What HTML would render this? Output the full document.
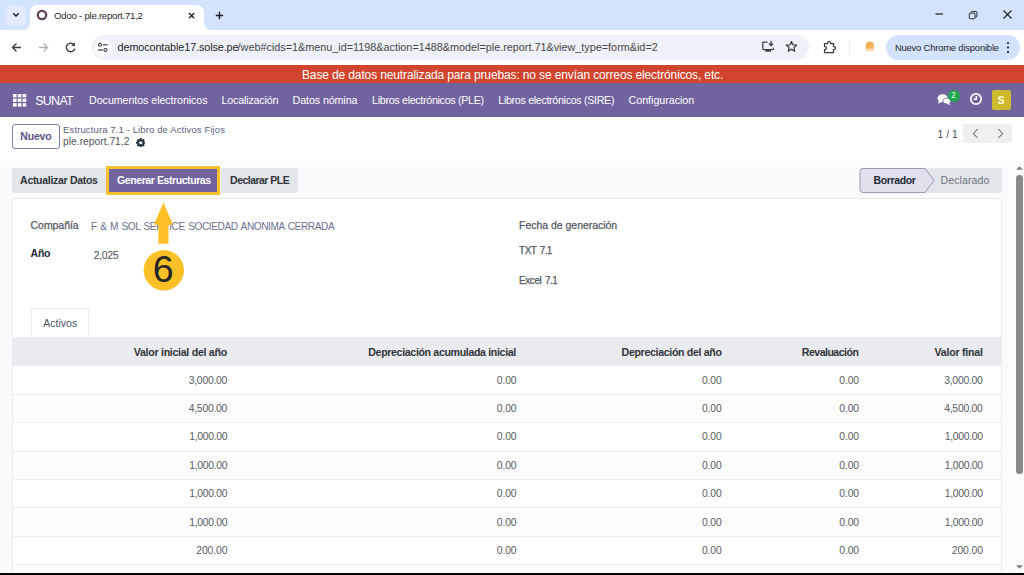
<!DOCTYPE html>
<html lang="es">
<head>
<meta charset="utf-8">
<title>Odoo - ple.report.71,2</title>
<style>
*{box-sizing:border-box;margin:0;padding:0}
html,body{width:1024px;height:575px;overflow:hidden;background:#f9fafb}
body{position:relative;font-family:"Liberation Sans",sans-serif;font-size:11px;color:#374151}
.abs,.t{position:absolute}
.t{white-space:nowrap;line-height:1}
/* browser chrome */
#tabstrip{left:0;top:0;width:1024px;height:30px;background:#d3e3fd}
#toolbar{left:0;top:30px;width:1024px;height:35px;background:#fff}
#tab{left:30px;top:5px;width:174px;height:26px;background:#fff;border-radius:8px 8px 0 0}
#tabsearch{left:5px;top:5px;width:21px;height:21px;border-radius:6px;background:#e1ebfd}
#omni{left:92px;top:35px;width:717px;height:25px;border-radius:12.5px;background:#eef1f7}
#siteinfo{left:93.500px;top:38.500px;width:18px;height:18px;border-radius:9px;background:#fafbfd}
#chip{left:886px;top:35px;width:134px;height:25px;border-radius:12.5px;background:#d3e3fd}
/* odoo */
#banner{left:0;top:65px;width:1024px;height:18.4px;background:#d1452e}
#navbar{left:0;top:83px;width:1024px;height:34px;background:#71639e}
#cp{left:0;top:117px;width:1024px;height:44.6px;background:#fff;border-bottom:1px solid #e3e6ea}
#content{left:0;top:161px;width:1012px;height:412px;background:#f9fafb}
#sheet{left:12px;top:198px;width:989.5px;height:380px;background:#fff;border:1px solid #e9ebee;border-radius:3px 3px 0 0}
#scroll{left:1012px;top:161px;width:12px;height:412px;background:#fbfcfc}
#thumb{left:1016px;top:175px;width:6.5px;height:298.5px;border-radius:3.2px;background:#88898b}
#blackbar{left:0;top:572.5px;width:1024px;height:3px;background:#000}
.nav{color:#fff;font-size:11px;top:95px}
.btn{top:168px;height:25px;background:#e2e5e9;color:#30353b;font-weight:bold;font-size:10.5px;text-align:center;line-height:25px;white-space:nowrap}
.lbl{color:#4b5563;font-size:10.5px}
.val{color:#5d6470;font-size:10.5px}
.th{top:347px;font-weight:bold;color:#30353b;font-size:10.5px;text-align:right}
.td{color:#4b5058;font-size:10.5px;text-align:right}
.row{left:13px;width:988px;height:28.5px;border-bottom:1px solid #eaecef}
</style>
</head>
<body>
<!-- Chrome tab strip -->
<div id="tabstrip" class="abs"></div>
<div id="toolbar" class="abs"></div>
<div id="tabsearch" class="abs"></div>
<svg class="abs" style="left:10.500px;top:11px" width="10" height="8" viewBox="0 0 10 8"><path d="M2.200 2.300 L5 5 L7.800 2.300" fill="none" stroke="#1f1f1f" stroke-width="1.500"/></svg>
<svg class="abs" style="left:20px;top:0" width="200" height="31" viewBox="0 0 200 31"><path d="M2 30 Q10 30 10 22 L10 13 Q10 5 18 5 L176 5 Q184 5 184 13 L184 22 Q184 30 192 30 L192 31 L2 31 Z" fill="#fff"/></svg>
<svg class="abs" style="left:36px;top:9px" width="12" height="12" viewBox="0 0 12 12"><circle cx="6" cy="6" r="4.200" fill="none" stroke="#5f4359" stroke-width="2.300"/></svg>
<svg class="abs" style="left:187px;top:11px" width="9" height="9" viewBox="0 0 9 9"><path d="M2 2 L7.200 7.200 M7.200 2 L2 7.200" stroke="#1f1f1f" stroke-width="1.300" fill="none"/></svg>
<svg class="abs" style="left:214px;top:10px" width="11" height="11" viewBox="0 0 11 11"><path d="M5.500 1.800 V9.200 M1.800 5.500 H9.200" stroke="#1f1f1f" stroke-width="1.400" fill="none"/></svg>
<!-- window controls -->
<svg class="abs" style="left:934px;top:8px" width="12" height="12" viewBox="0 0 12 12"><path d="M1.500 6 H9" stroke="#1f1f1f" stroke-width="1.200"/></svg>
<svg class="abs" style="left:967.800px;top:9.500px" width="10.500" height="10.500" viewBox="0 0 12 12"><rect x="1.5" y="3.5" width="6.5" height="6.5" rx="1.2" fill="none" stroke="#1f1f1f" stroke-width="1.1"/><path d="M3.8 3.3 V2.8 a1.2 1.2 0 0 1 1.2 -1.2 H9 a1.2 1.2 0 0 1 1.2 1.2 V7 a1.2 1.2 0 0 1 -1.2 1.2 H8.3" fill="none" stroke="#1f1f1f" stroke-width="1.1"/></svg>
<svg class="abs" style="left:1002px;top:9px" width="11" height="11" viewBox="0 0 11 11"><path d="M1.5 1.5 L9.5 9.5 M9.5 1.5 L1.5 9.5" stroke="#1f1f1f" stroke-width="1.1" fill="none"/></svg>
<!-- toolbar icons -->
<svg class="abs" style="left:11px;top:42px" width="11" height="11" viewBox="0 0 11 11"><path d="M10 5.5 H1.8 M5.5 1.5 L1.5 5.5 L5.5 9.5" stroke="#3c3c3c" stroke-width="1.4" fill="none"/></svg>
<svg class="abs" style="left:38px;top:42px" width="11" height="11" viewBox="0 0 11 11"><path d="M1 5.5 H9.2 M5.5 1.5 L9.5 5.5 L5.5 9.5" stroke="#b4b4b4" stroke-width="1.3" fill="none"/></svg>
<svg class="abs" style="left:64px;top:41px" width="13" height="13" viewBox="0 0 13 13"><path d="M10.3 4.2 A4.3 4.3 0 1 0 10.8 7.6" stroke="#3c3c3c" stroke-width="1.4" fill="none"/><path d="M10.9 1.3 V4.9 H7.3 Z" fill="#3c3c3c"/></svg>
<div id="omni" class="abs"></div>
<div id="siteinfo" class="abs"></div>
<svg class="abs" style="left:97px;top:42px" width="12" height="11" viewBox="0 0 12 11"><circle cx="3" cy="2.8" r="1.5" fill="none" stroke="#3c3c3c" stroke-width="1.1"/><path d="M6 2.8 H10.5" stroke="#3c3c3c" stroke-width="1.2"/><circle cx="8.5" cy="8" r="1.5" fill="none" stroke="#3c3c3c" stroke-width="1.1"/><path d="M1 8 H5.8" stroke="#3c3c3c" stroke-width="1.2"/></svg>
<svg class="abs" style="left:760.700px;top:40.300px" width="14" height="13" viewBox="0 0 14 13"><path d="M6.500 2 H2.800 a1 1 0 0 0 -1 1 V8.600 a1 1 0 0 0 1 1 H11.400 a1 1 0 0 0 1 -1 V7.800" fill="none" stroke="#3c3c3c" stroke-width="1.250"/><path d="M4.300 10.900 H9.900" fill="none" stroke="#3c3c3c" stroke-width="1.700"/><path d="M10 0.800 V5.200 M8 3.500 L10 5.500 L12 3.500" fill="none" stroke="#3c3c3c" stroke-width="1.250"/></svg>
<svg class="abs" style="left:785px;top:40.300px" width="13" height="13" viewBox="0 0 14 14"><path d="M7 1.600 L8.600 5.200 L12.500 5.600 L9.600 8.200 L10.400 12 L7 10 L3.600 12 L4.400 8.200 L1.500 5.600 L5.400 5.200 Z" fill="none" stroke="#3c3c3c" stroke-width="1.350" stroke-linejoin="round"/></svg>
<svg class="abs" style="left:822.500px;top:39.500px" width="14" height="14" viewBox="0 0 14 14"><path d="M1.500 3.500 H4.500 V3 a1.500 1.500 0 0 1 3 0 V3.500 H10.500 V6.500 H11 a1.500 1.500 0 0 1 0 3 H10.500 V12.500 H1.500 V9.500 H2 a1.500 1.500 0 0 0 0 -3 H1.500 Z" fill="none" stroke="#3c3c3c" stroke-width="1.250" stroke-linejoin="round"/></svg>
<div class="abs" style="left:849px;top:41px;width:1px;height:13px;background:#e3e9f5"></div>
<svg class="abs" style="left:863px;top:40px" width="14" height="14" viewBox="0 0 14 14"><path d="M2.700 8.800 V5.700 a4.100 4.100 0 0 1 8.200 0 V8.800 Z" fill="#f6b256"/><rect x="2.700" y="9.300" width="8.200" height="1.900" rx="0.900" fill="#f9d7a3"/></svg>
<div id="chip" class="abs"></div>
<svg class="abs" style="left:1006px;top:41px" width="4" height="13" viewBox="0 0 4 13"><circle cx="2" cy="2" r="1.1" fill="#1f1f1f"/><circle cx="2" cy="6.5" r="1.1" fill="#1f1f1f"/><circle cx="2" cy="11" r="1.1" fill="#1f1f1f"/></svg>

<!-- Odoo -->
<div id="navbar" class="abs"></div>
<div id="banner" class="abs"></div>
<svg class="abs" style="left:13px;top:94px" width="14" height="13" viewBox="0 0 14 13"><g fill="#fff"><rect x="0" y="0" width="3.6" height="3.4"/><rect x="4.8" y="0" width="3.6" height="3.4"/><rect x="9.6" y="0" width="3.6" height="3.4"/><rect x="0" y="4.6" width="3.6" height="3.4"/><rect x="4.8" y="4.6" width="3.6" height="3.4"/><rect x="9.6" y="4.6" width="3.6" height="3.4"/><rect x="0" y="9.2" width="3.6" height="3.4"/><rect x="4.8" y="9.2" width="3.6" height="3.4"/><rect x="9.6" y="9.2" width="3.6" height="3.4"/></g></svg>
<!-- systray -->
<svg class="abs" style="left:936.500px;top:92.500px" width="15" height="13.100" viewBox="0 0 16 14"><ellipse cx="6" cy="5.5" rx="5.5" ry="4.2" fill="#fff"/><path d="M2 8 L1 11.5 L5 9.5 Z" fill="#fff"/><ellipse cx="10.5" cy="8.5" rx="4.2" ry="3.2" fill="#fff" stroke="#71639e" stroke-width="0.8"/><path d="M12.5 10.5 L14.5 13 L10.5 11.5 Z" fill="#fff"/></svg>
<div class="abs" style="left:947.500px;top:89.900px;width:12.600px;height:12.600px;border-radius:6.300px;background:#21a84f"></div>
<svg class="abs" style="left:969px;top:92.300px" width="14" height="14" viewBox="0 0 14 14"><circle cx="7" cy="7" r="5.2" fill="none" stroke="#fff" stroke-width="1.7"/><path d="M7.3 4 V7.3 H4.6" fill="none" stroke="#fff" stroke-width="1.5"/></svg>
<div class="abs" style="left:992px;top:90.300px;width:19.200px;height:19.900px;border-radius:2px;background:#cdb92d"></div>

<!-- control panel -->
<div id="cp" class="abs"></div>
<div class="abs" style="left:12px;top:123.5px;width:48px;height:25px;border:1px solid #8378ad;border-radius:3px;background:#fff"></div>
<svg class="abs" style="left:135.600px;top:137.500px" width="9.500" height="9.500" viewBox="0 0 10 10"><g transform="translate(5 5)"><g fill="#2c3942"><rect x="-1.1" y="-5" width="2.2" height="10"/><rect x="-1.1" y="-5" width="2.2" height="10" transform="rotate(45)"/><rect x="-1.1" y="-5" width="2.2" height="10" transform="rotate(90)"/><rect x="-1.1" y="-5" width="2.2" height="10" transform="rotate(135)"/><circle r="3.6"/></g><circle r="1.7" fill="#fff"/></g></svg>
<div class="abs" style="left:963px;top:124px;width:49px;height:18.5px;background:#eeeff1;border-radius:3px"></div>
<svg class="abs" style="left:972px;top:128px" width="7" height="11" viewBox="0 0 7 11"><path d="M5.5 1 L1.5 5.5 L5.5 10" fill="none" stroke="#6b6b6b" stroke-width="1.1"/></svg>
<svg class="abs" style="left:997px;top:128px" width="7" height="11" viewBox="0 0 7 11"><path d="M1.5 1 L5.5 5.5 L1.5 10" fill="none" stroke="#6b6b6b" stroke-width="1.1"/></svg>

<!-- content -->
<div id="content" class="abs"></div>
<div id="sheet" class="abs"></div>
<!-- status bar buttons -->
<div class="abs btn" id="b1" style="left:12px;width:95px;border-radius:3px 0 0 3px"></div>
<div class="abs" style="left:106px;top:166px;width:114px;height:29px;background:#f6c12c"></div>
<div class="abs btn" id="b2" style="left:109px;width:108px;top:169px;height:23px;line-height:23px;background:#71639e;color:#fff"></div>
<div class="abs btn" id="b3" style="left:221px;width:77px;border-radius:0 3px 3px 0"></div>
<!-- status pills -->
<svg class="abs" style="left:859px;top:167px" width="144" height="27" viewBox="0 0 144 27"><path d="M66 1 H140 a3 3 0 0 1 3 3 V23 a3 3 0 0 1 -3 3 H66 Z" fill="#e2e5e9"/><path d="M4 1.5 H66 L75 13.5 L66 25.500 H4 a3 3 0 0 1 -3 -3 V4.500 a3 3 0 0 1 3 -3 Z" fill="#e3e0ee" stroke="#9d97b5" stroke-width="1"/></svg>

<!-- form fields -->


<!-- notebook tab -->
<div class="abs" style="left:31px;top:308px;width:58px;height:30px;border:1px solid #eaecef;border-bottom:none;border-radius:3px 3px 0 0;background:#fff"></div>

<!-- table -->
<div class="abs" style="left:12.500px;top:337px;width:988.500px;height:29px;background:#e9ebee"></div>

<div class="abs row" style="top:366.5px;height:28.38px;background:#ffffff"></div>
<div class="abs row" style="top:394.9px;height:28.38px;background:#fcfcfd"></div>
<div class="abs row" style="top:423.3px;height:28.38px;background:#ffffff"></div>
<div class="abs row" style="top:451.6px;height:28.38px;background:#fcfcfd"></div>
<div class="abs row" style="top:480.0px;height:28.38px;background:#ffffff"></div>
<div class="abs row" style="top:508.4px;height:28.38px;background:#fcfcfd"></div>
<div class="abs row" style="top:536.8px;height:28.38px;background:#ffffff"></div>
<div class="abs row" style="top:565.2px;height:28.38px;background:#fcfcfd;border-bottom:none"></div>
<span class="t" id="tabtitle" style="left:54.1px;top:10.7px;font-size:9.6px;color:#1f1f1f;letter-spacing:-0.24px">Odoo - ple.report.71,2</span>
<span class="t" id="urld" style="left:117.6px;top:42.1px;font-size:10.8px;color:#1f1f1f;letter-spacing:-0.10px">democontable17.solse.pe</span>
<span class="t" id="urlp" style="left:237.6px;top:42.1px;font-size:10.8px;color:#474747;letter-spacing:0.01px">/web#cids=1&amp;menu_id=1198&amp;action=1488&amp;model=ple.report.71&amp;view_type=form&amp;id=2</span>
<span class="t" id="chiptxt" style="left:894.9px;top:42.5px;font-size:9.4px;color:#1f1f1f;letter-spacing:-0.17px">Nuevo Chrome disponible</span>
<span class="t" id="bannertxt" style="left:302.0px;top:68.8px;font-size:12px;color:#fff;letter-spacing:-0.13px">Base de datos neutralizada para pruebas: no se envían correos electrónicos, etc.</span>
<span class="t" id="brand" style="left:35.2px;top:94.6px;font-size:12.4px;color:#fff;letter-spacing:-0.65px">SUNAT</span>
<span class="t" id="n1" style="left:89.1px;top:95.4px;font-size:10.7px;color:#fff;letter-spacing:-0.07px">Documentos electronicos</span>
<span class="t" id="n2" style="left:221.6px;top:95.4px;font-size:10.7px;color:#fff;letter-spacing:-0.18px">Localización</span>
<span class="t" id="n3" style="left:292.6px;top:95.4px;font-size:10.7px;color:#fff;letter-spacing:-0.10px">Datos nómina</span>
<span class="t" id="n4" style="left:372.1px;top:95.4px;font-size:10.7px;color:#fff;letter-spacing:-0.31px">Libros electrónicos (PLE)</span>
<span class="t" id="n5" style="left:498.3px;top:95.4px;font-size:10.7px;color:#fff;letter-spacing:-0.32px">Libros electrónicos (SIRE)</span>
<span class="t" id="n6" style="left:628.6px;top:95.4px;font-size:10.7px;color:#fff;letter-spacing:-0.03px">Configuracion</span>
<span class="t" id="badge" style="left:951.3px;top:92.3px;font-size:8.2px;color:#eafff0">2</span>
<span class="t" id="avatar" style="left:997.6px;top:95.2px;font-size:10.6px;color:#fffbe0;font-weight:bold">S</span>
<span class="t" id="nuevo" style="left:20.3px;top:131.3px;font-size:10.5px;color:#5d5288;font-weight:bold;letter-spacing:-0.19px">Nuevo</span>
<span class="t" id="bc1" style="left:63.1px;top:125.2px;font-size:9.5px;color:#5b5f7a;letter-spacing:0.12px">Estructura 7.1 - Libro de Activos Fijos</span>
<span class="t" id="bc2" style="left:63.1px;top:137.0px;font-size:10.2px;color:#50555c;letter-spacing:0.04px">ple.report.71,2</span>
<span class="t" id="pager" style="left:937.5px;top:129.6px;font-size:10.2px;color:#444a52;word-spacing:1.2px;letter-spacing:-0.53px">1 / 1</span>
<span class="t" id="b1" style="left:20.1px;top:175.3px;font-size:10.5px;color:#30353b;font-weight:bold;letter-spacing:-0.30px">Actualizar Datos</span>
<span class="t" id="b2" style="left:117.1px;top:175.3px;font-size:10.5px;color:#fff;font-weight:bold;letter-spacing:-0.42px">Generar Estructuras</span>
<span class="t" id="b3" style="left:230.1px;top:175.3px;font-size:10.5px;color:#30353b;font-weight:bold;letter-spacing:-0.53px">Declarar PLE</span>
<span class="t" id="st1" style="left:873.4px;top:175.2px;font-size:10.5px;color:#1f2937;font-weight:bold;letter-spacing:-0.34px">Borrador</span>
<span class="t" id="st2" style="left:940.6px;top:175.2px;font-size:10.5px;color:#6b7280;letter-spacing:0.10px">Declarado</span>
<span class="t" id="l1" style="left:30.6px;top:220.1px;font-size:10.5px;color:#545960;-webkit-text-stroke:0.25px #545960;letter-spacing:-0.06px">Compañía</span>
<span class="t" id="v1" style="left:91.1px;top:221.5px;font-size:10.1px;color:#6d7190;word-spacing:1px;letter-spacing:-0.40px">F &amp; M SOL SERVICE SOCIEDAD ANONIMA CERRADA</span>
<span class="t" id="l2" style="left:30.6px;top:247.8px;font-size:10.5px;color:#1f2937;font-weight:bold;letter-spacing:-0.29px">Año</span>
<span class="t" id="v2" style="left:93.8px;top:249.6px;font-size:10.5px;color:#4b5058;letter-spacing:-0.36px">2,025</span>
<span class="t" id="l3" style="left:519.1px;top:220.1px;font-size:10.5px;color:#545960;-webkit-text-stroke:0.25px #545960;letter-spacing:-0.03px">Fecha de generación</span>
<span class="t" id="l4" style="left:519.1px;top:246.0px;font-size:10px;word-spacing:1.3px;color:#545960;-webkit-text-stroke:0.25px #545960;letter-spacing:-0.56px">TXT 7.1</span>
<span class="t" id="l5" style="left:519.1px;top:275.5px;font-size:10px;word-spacing:1.3px;color:#545960;-webkit-text-stroke:0.25px #545960;letter-spacing:-0.45px">Excel 7.1</span>
<span class="t" id="tabA" style="left:43.3px;top:318.1px;font-size:10.5px;color:#4b5563">Activos</span>
<span class="t" id="h1" style="left:133.8px;top:346.7px;font-size:10.6px;color:#30353b;font-weight:bold;letter-spacing:-0.28px">Valor inicial del año</span>
<span class="t" id="h2" style="left:368.3px;top:346.7px;font-size:10.6px;color:#30353b;font-weight:bold;letter-spacing:-0.34px">Depreciación acumulada inicial</span>
<span class="t" id="h3" style="left:621.6px;top:346.7px;font-size:10.6px;color:#30353b;font-weight:bold;letter-spacing:-0.33px">Depreciación del año</span>
<span class="t" id="h4" style="left:801.8px;top:346.7px;font-size:10.6px;color:#30353b;font-weight:bold;letter-spacing:-0.53px">Revaluación</span>
<span class="t" id="h5" style="left:934.6px;top:346.7px;font-size:10.6px;color:#30353b;font-weight:bold;letter-spacing:-0.23px">Valor final</span>
<span class="t" id="r0c0" style="left:188.7px;top:375.6px;font-size:10.4px;color:#585d63;letter-spacing:-0.25px">3,000.00</span>
<span class="t" id="r0c1" style="left:496.8px;top:375.6px;font-size:10.4px;color:#585d63;letter-spacing:-0.13px">0.00</span>
<span class="t" id="r0c2" style="left:701.9px;top:375.6px;font-size:10.4px;color:#585d63;letter-spacing:-0.13px">0.00</span>
<span class="t" id="r0c3" style="left:839.3px;top:375.6px;font-size:10.4px;color:#585d63;letter-spacing:-0.13px">0.00</span>
<span class="t" id="r0c4" style="left:944.2px;top:375.6px;font-size:10.4px;color:#585d63;letter-spacing:-0.25px">3,000.00</span>
<span class="t" id="r1c0" style="left:188.7px;top:404.0px;font-size:10.4px;color:#585d63;letter-spacing:-0.25px">4,500.00</span>
<span class="t" id="r1c1" style="left:496.8px;top:404.0px;font-size:10.4px;color:#585d63;letter-spacing:-0.13px">0.00</span>
<span class="t" id="r1c2" style="left:701.9px;top:404.0px;font-size:10.4px;color:#585d63;letter-spacing:-0.13px">0.00</span>
<span class="t" id="r1c3" style="left:839.3px;top:404.0px;font-size:10.4px;color:#585d63;letter-spacing:-0.13px">0.00</span>
<span class="t" id="r1c4" style="left:944.2px;top:404.0px;font-size:10.4px;color:#585d63;letter-spacing:-0.25px">4,500.00</span>
<span class="t" id="r2c0" style="left:189.3px;top:432.4px;font-size:10.4px;color:#585d63;letter-spacing:-0.33px">1,000.00</span>
<span class="t" id="r2c1" style="left:496.8px;top:432.4px;font-size:10.4px;color:#585d63;letter-spacing:-0.13px">0.00</span>
<span class="t" id="r2c2" style="left:701.9px;top:432.4px;font-size:10.4px;color:#585d63;letter-spacing:-0.13px">0.00</span>
<span class="t" id="r2c3" style="left:839.3px;top:432.4px;font-size:10.4px;color:#585d63;letter-spacing:-0.13px">0.00</span>
<span class="t" id="r2c4" style="left:944.8px;top:432.4px;font-size:10.4px;color:#585d63;letter-spacing:-0.33px">1,000.00</span>
<span class="t" id="r3c0" style="left:189.3px;top:460.7px;font-size:10.4px;color:#585d63;letter-spacing:-0.33px">1,000.00</span>
<span class="t" id="r3c1" style="left:496.8px;top:460.7px;font-size:10.4px;color:#585d63;letter-spacing:-0.13px">0.00</span>
<span class="t" id="r3c2" style="left:701.9px;top:460.7px;font-size:10.4px;color:#585d63;letter-spacing:-0.13px">0.00</span>
<span class="t" id="r3c3" style="left:839.3px;top:460.7px;font-size:10.4px;color:#585d63;letter-spacing:-0.13px">0.00</span>
<span class="t" id="r3c4" style="left:944.8px;top:460.7px;font-size:10.4px;color:#585d63;letter-spacing:-0.33px">1,000.00</span>
<span class="t" id="r4c0" style="left:189.3px;top:489.1px;font-size:10.4px;color:#585d63;letter-spacing:-0.33px">1,000.00</span>
<span class="t" id="r4c1" style="left:496.8px;top:489.1px;font-size:10.4px;color:#585d63;letter-spacing:-0.13px">0.00</span>
<span class="t" id="r4c2" style="left:701.9px;top:489.1px;font-size:10.4px;color:#585d63;letter-spacing:-0.13px">0.00</span>
<span class="t" id="r4c3" style="left:839.3px;top:489.1px;font-size:10.4px;color:#585d63;letter-spacing:-0.13px">0.00</span>
<span class="t" id="r4c4" style="left:944.8px;top:489.1px;font-size:10.4px;color:#585d63;letter-spacing:-0.33px">1,000.00</span>
<span class="t" id="r5c0" style="left:189.3px;top:517.5px;font-size:10.4px;color:#585d63;letter-spacing:-0.33px">1,000.00</span>
<span class="t" id="r5c1" style="left:496.8px;top:517.5px;font-size:10.4px;color:#585d63;letter-spacing:-0.13px">0.00</span>
<span class="t" id="r5c2" style="left:701.9px;top:517.5px;font-size:10.4px;color:#585d63;letter-spacing:-0.13px">0.00</span>
<span class="t" id="r5c3" style="left:839.3px;top:517.5px;font-size:10.4px;color:#585d63;letter-spacing:-0.13px">0.00</span>
<span class="t" id="r5c4" style="left:944.8px;top:517.5px;font-size:10.4px;color:#585d63;letter-spacing:-0.33px">1,000.00</span>
<span class="t" id="r6c0" style="left:196.3px;top:545.9px;font-size:10.4px;color:#585d63;letter-spacing:-0.13px">200.00</span>
<span class="t" id="r6c1" style="left:496.8px;top:545.9px;font-size:10.4px;color:#585d63;letter-spacing:-0.13px">0.00</span>
<span class="t" id="r6c2" style="left:701.9px;top:545.9px;font-size:10.4px;color:#585d63;letter-spacing:-0.13px">0.00</span>
<span class="t" id="r6c3" style="left:839.3px;top:545.9px;font-size:10.4px;color:#585d63;letter-spacing:-0.13px">0.00</span>
<span class="t" id="r6c4" style="left:951.8px;top:545.9px;font-size:10.4px;color:#585d63;letter-spacing:-0.13px">200.00</span>
<!-- annotation -->
<svg class="abs" style="left:140px;top:200px" width="50" height="95" viewBox="0 0 50 95"><path d="M23.400 2.600 L33 24.700 L28.500 24.700 L28.500 43.800 L18.400 43.800 L18.400 24.700 L13.800 24.700 Z" fill="#fbc028"/><circle cx="23.800" cy="70.300" r="20.200" fill="#fbc028"/></svg>
<span class="t" id="six" style="left:152.8px;top:251.3px;font-size:37.5px;color:#262626">6</span>
<div id="scroll" class="abs"></div>
<svg class="abs" style="left:1015.5px;top:166px" width="7" height="4" viewBox="0 0 7 4"><path d="M0 3.800 L3.500 0.300 L7 3.800 Z" fill="#828282"/></svg>
<div id="thumb" class="abs"></div>
<svg class="abs" style="left:1015.5px;top:564.5px" width="7" height="4" viewBox="0 0 7 4"><path d="M0 0.200 L3.500 3.700 L7 0.200 Z" fill="#828282"/></svg>
<div id="blackbar" class="abs"></div>
</body>
</html>
